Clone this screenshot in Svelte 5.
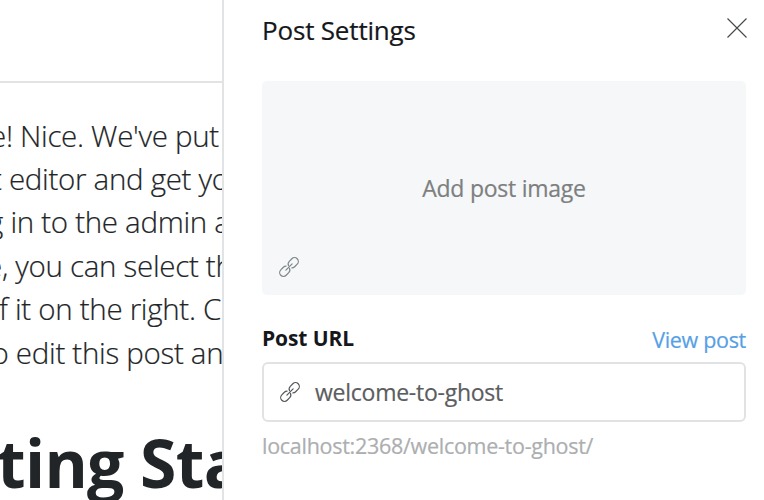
<script>
  const lines = [
    { text: "e! Nice. We've put", x: -10 },
    { text: 't editor and get yo', x: -8 },
    { text: 'g in to the admin a', x: -12 },
    { text: 'e, you can select th', x: -14 },
    { text: 'f it on the right. C', x: -1 },
    { text: 'o edit this post an', x: -8.5 },
  ];
</script>

{#snippet link()}
  <svg class="link" viewBox="0 0 22 22" width="22" height="22" aria-hidden="true">
    <g transform="rotate(-45 11 11)">
      <path d="M9.6 8.3 A3.8 3.8 0 0 0 6.8 7.2 H3.2 A3.8 3.8 0 0 0 3.2 14.8 H6.8 A3.8 3.8 0 0 0 10.4 12.2" />
      <path d="M12.4 13.7 A3.8 3.8 0 0 0 15.2 14.8 H18.8 A3.8 3.8 0 0 0 18.8 7.2 H15.2 A3.8 3.8 0 0 0 11.6 9.8" />
      <path d="M6.6 11 H15.4" />
    </g>
  </svg>
{/snippet}

<div class="screen">
  <main class="editor">
    <div class="toolbar"></div>
    <div class="copy">
      {#each lines as line}
        <div class="line" style="margin-left: {line.x}px">{line.text}</div>
      {/each}
    </div>
    <h1>ting Sta</h1>
  </main>

  <aside class="settings">
    <header>
      <h2>Post Settings</h2>
      <button class="close" aria-label="Close">
        <svg viewBox="0 0 20 20" width="20" height="20"><path d="M.5 .5 L19.5 19.5 M19.5 .5 L.5 19.5" /></svg>
      </button>
    </header>
    <div class="uploader">
      <span>Add post image</span>
      <div class="corner">{@render link()}</div>
    </div>
    <div class="labels">
      <b>Post URL</b>
      <a href="#view">View post</a>
    </div>
    <div class="field">
      {@render link()}
      <span>welcome-to-ghost</span>
    </div>
    <p>localhost:2368/welcome-to-ghost/</p>
  </aside>
</div>

<style>
  :global(body) { margin: 0; overflow: hidden; background: #fff; }
  .screen {
    display: flex;
    width: 764px;
    height: 500px;
    overflow: hidden;
    font-family: "Open Sans", "Noto Sans", sans-serif;
    color: #15171a;
  }
  .editor { width: 222px; flex: none; overflow: hidden; white-space: nowrap; }
  .toolbar { height: 81px; border-bottom: 2px solid #e1e3e4; }
  .copy { padding-top: 30.5px; font-size: 29.5px; font-weight: 300; line-height: 43.4px; letter-spacing: -.3px; color: #222527; -webkit-text-stroke: .2px #222527; }
  h1 { margin: 33px 0 0 -3px; font-size: 66px; line-height: 110px; font-weight: 700; letter-spacing: -.7px; color: #222527; }
  .settings {
    box-sizing: border-box;
    flex: 1;
    border-left: 2px solid #e1e3e4;
    padding: 0 18px 0 38px;
  }
  header { display: flex; justify-content: space-between; height: 81px; }
  h2 { margin: 12px 0 0; font-size: 26px; line-height: 36px; font-weight: 400; letter-spacing: -.18px; -webkit-text-stroke: .2px; }
  .close { align-self: flex-start; margin: 18px -.5px 0 0; padding: 0; border: 0; background: none; line-height: 0; }
  .close svg { stroke: #45484a; stroke-width: 1.1; }
  .uploader {
    display: flex;
    position: relative;
    height: 214px;
    align-items: center;
    justify-content: center;
    border-radius: 5px;
    background: #f5f7f9;
    color: #7d7f80;
    font-size: 23px;
    letter-spacing: -.25px;
    -webkit-text-stroke: .2px;
  }
  .corner { position: absolute; left: 16px; bottom: 17px; line-height: 0; }
  .link { flex: none; fill: none; stroke: #55585a; stroke-width: 1.2; stroke-linecap: round; }
  .corner .link { stroke: #7f8688; }
  .labels { display: flex; justify-content: space-between; height: 66.5px; font-size: 21.5px; line-height: 30px; }
  b { margin-top: 28px; font-size: 21px; letter-spacing: -.1px; }
  a { margin-top: 30px; color: #55a0e6; text-decoration: none; letter-spacing: -.3px; -webkit-text-stroke: .2px; }
  .field {
    box-sizing: border-box;
    display: flex;
    align-items: center;
    gap: 14px;
    height: 60px;
    padding: 0 15px;
    border: 2px solid #e1e2e3;
    border-radius: 6px;
    color: #5b5d5f;
    font-size: 23px;
    letter-spacing: -.25px;
    -webkit-text-stroke: .2px;
  }
  p { margin: 9.5px 0 0; color: #acaeb0; font-size: 21.5px; letter-spacing: -.28px; line-height: 30px; white-space: nowrap; -webkit-text-stroke: .2px; }
</style>
